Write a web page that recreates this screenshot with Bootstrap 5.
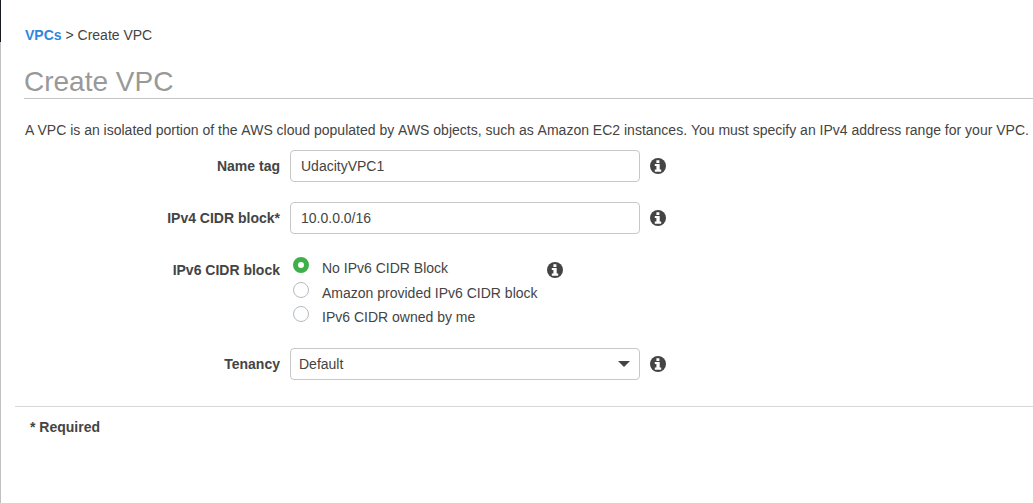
<!DOCTYPE html>
<html lang="en">
<head>
<meta charset="utf-8">
<meta name="viewport" content="width=device-width, initial-scale=1">
<title>Create VPC</title>
<link rel="stylesheet" href="https://cdn.jsdelivr.net/npm/bootstrap@5.3.0/dist/css/bootstrap.min.css">
<style>
body { font: 14px/20px "Liberation Sans", Arial, sans-serif; color: #444; background: #fff; }
.page-edge { width: 1px; background: #c0c0c0; }
.page-edge-top { height: 42px; background: #16191f; }
.page-main { padding-top: 25px; }
.crumbs { padding-left: 24px; }
.crumbs a { color: #2e87e0; }
.page-title { margin: 17px 0 0 23px; height: 37px; border-bottom: 1px solid #c4c4c4; font-size: 28px; line-height: 40px; font-weight: 400; color: #999; }
.intro { margin: 21px 0 10px 24px; }
.field-row { min-height: 32px; margin-bottom: 20px; }
.field-row-tall { height: 74px; }
.field-label { width: 279px; line-height: 32px; margin-right: 10px; flex: none; }
.field-box.form-control, .field-box.form-select { width: 350px; height: 32px; padding: 5px 10px; border: 1px solid #c8c8c8; border-radius: 4px; font-size: 14px; line-height: 20px; color: #444; }
.field-box.form-select { padding-left: 8px; background-image: url("data:image/svg+xml,%3csvg xmlns='http://www.w3.org/2000/svg' viewBox='0 0 12 6'%3e%3cpath fill='%23444' d='M0 0h12L6 6z'/%3e%3c/svg%3e"); background-size: 12px 6px; background-position: right 9px top 12px; }
.info-icon { width: 16px; height: 16px; margin: 8px 0 0 10px; flex: none; }
.choices { width: 247.4px; padding: 3px 0 0 3px; }
.choice { min-height: 0; height: 24.5px; padding: 0; margin: 0; }
.choice .form-check-input { float: none; flex: none; width: 16px; height: 16px; margin: 0 13px 0 0; border: 1px solid #b4bbc2; }
.choice .form-check-input:checked { background: #fff; border: 5px solid #3eb049; }
.choice label { line-height: 16px; padding-top: 3px; white-space: nowrap; }
.page-foot { margin: 26px 0 0 14px; padding: 10px 0 0 15px; border-top: 1px solid #d8d8d8; }
</style>
</head>
<body class="overflow-hidden">
<svg class="d-none" xmlns="http://www.w3.org/2000/svg">
  <symbol id="info" viewBox="0 0 16 16"><circle cx="8" cy="8" r="8" fill="#444"/><path fill="#fff" d="M6.4 2.2h3v2.7h-3zM4.8 6h4.9v5.6h1.5v2.2H4.8v-2.2h1.6V8.1H4.8z"/></symbol>
</svg>
<div class="d-flex vh-100">
  <div class="page-edge flex-shrink-0"><div class="page-edge-top"></div></div>
  <main class="page-main flex-grow-1">
    <nav class="crumbs" aria-label="breadcrumb"><a href="#" class="fw-bold text-decoration-none">VPCs</a> &gt; Create VPC</nav>
    <h1 class="page-title">Create VPC</h1>
    <p class="intro text-nowrap">A VPC is an isolated portion of the <span class="d-inline-block">AWS</span> cloud populated by <span class="d-inline-block">AWS</span> objects, such as <span class="d-inline-block">Amazon</span> EC2 instances. <span class="d-inline-block">You</span> must specify an IPv4 address range for your VPC.</p>
    <form>
      <div class="field-row d-flex align-items-start">
        <label class="field-label fw-bold text-end" for="name">Name tag</label>
        <input class="field-box form-control flex-shrink-0" id="name" type="text" value="UdacityVPC1">
        <svg class="info-icon"><use href="#info"/></svg>
      </div>
      <div class="field-row d-flex align-items-start">
        <label class="field-label fw-bold text-end" for="cidr">IPv4 CIDR block*</label>
        <input class="field-box form-control flex-shrink-0" id="cidr" type="text" value="10.0.0.0/16">
        <svg class="info-icon"><use href="#info"/></svg>
      </div>
      <div class="field-row field-row-tall d-flex align-items-start">
        <div class="field-label fw-bold text-end">IPv6 CIDR block</div>
        <div class="choices">
          <div class="choice form-check d-flex"><input class="form-check-input" type="radio" name="v6" id="v6a" checked><label for="v6a">No IPv6 CIDR Block</label></div>
          <div class="choice form-check d-flex"><input class="form-check-input" type="radio" name="v6" id="v6b"><label for="v6b">Amazon provided IPv6 CIDR block</label></div>
          <div class="choice form-check d-flex"><input class="form-check-input" type="radio" name="v6" id="v6c"><label for="v6c">IPv6 CIDR owned by me</label></div>
        </div>
        <svg class="info-icon"><use href="#info"/></svg>
      </div>
      <div class="field-row d-flex align-items-start mb-0">
        <label class="field-label fw-bold text-end" for="tenancy">Tenancy</label>
        <select class="field-box form-select flex-shrink-0" id="tenancy"><option>Default</option></select>
        <svg class="info-icon"><use href="#info"/></svg>
      </div>
    </form>
    <footer class="page-foot fw-bold">* Required</footer>
  </main>
</div>
<script src="https://cdn.jsdelivr.net/npm/bootstrap@5.3.0/dist/js/bootstrap.bundle.min.js"></script>
</body>
</html>
